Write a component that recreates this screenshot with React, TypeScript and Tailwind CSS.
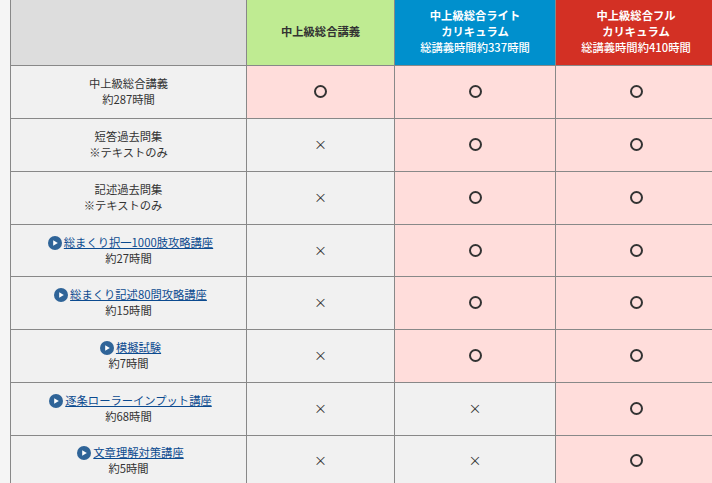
const FONT = "font-['Noto_Sans_CJK_JP','Noto_Sans',sans-serif]";

interface Row {
  title: string;
  sub: string;
  link?: boolean;
  // 記述過去問集 has its note pushed left in the picture
  subClass?: string;
  marks: [boolean, boolean, boolean];
  height: string;
}

const rows: Row[] = [
  { title: "中上級総合講義", sub: "約287時間", marks: [true, true, true], height: "h-[53px]" },
  { title: "短答過去問集", sub: "※テキストのみ", marks: [false, true, true], height: "h-[53px]" },
  { title: "記述過去問集", sub: "※テキストのみ", subClass: "pr-[11px]", marks: [false, true, true], height: "h-[53px]" },
  { title: "総まくり択一1000肢攻略講座", sub: "約27時間", link: true, marks: [false, true, true], height: "h-[52px]" },
  { title: "総まくり記述80問攻略講座", sub: "約15時間", link: true, marks: [false, true, true], height: "h-[53px]" },
  { title: "模擬試験", sub: "約7時間", link: true, marks: [false, true, true], height: "h-[53px]" },
  { title: "逐条ローラーインプット講座", sub: "約68時間", link: true, marks: [false, false, true], height: "h-[53px]" },
  { title: "文章理解対策講座", sub: "約5時間", link: true, marks: [false, false, true], height: "h-[51px]" },
];

function PlayIcon() {
  return (
    <svg viewBox="0 0 14 14" className="mr-[2px] ml-[4px] inline-block h-[14px] w-[14px] align-[-3px]" aria-hidden>
      <circle cx="7" cy="7" r="7" fill="#2f6498" />
      <path d="M5.2 4.2 9.8 7l-4.6 2.8z" fill="#fff" />
    </svg>
  );
}

function Mark({ on }: { on: boolean }) {
  if (on) {
    return <span className="mx-auto block h-[13px] w-[13px] rounded-full border-2 border-[#333]" />;
  }
  return <span className="block pb-[2px] text-[13px] leading-none text-[#333]">×</span>;
}

export default function App() {
  return (
    <div className={`h-[483px] w-[712px] overflow-hidden bg-[#f5f5f5] pl-[10px] ${FONT}`}>
      <table className="w-[706px] table-fixed border-collapse text-center text-[11.3px] leading-[16px] text-[#333]">
        <colgroup>
          <col className="w-[236px]" />
          <col className="w-[148px]" />
          <col className="w-[161px]" />
          <col className="w-[161px]" />
        </colgroup>
        <thead>
          <tr className="h-[65px]">
            <th className="border border-t-0 border-[#888] bg-[#dddddd]" />
            <th className="border border-t-0 border-[#888] bg-[#bfeb92] pb-[3px] font-bold">中上級総合講義</th>
            <th className="border border-t-0 border-[#888] bg-[#0090cd] pb-[3px] font-bold text-white">
              中上級総合ライト
              <br />
              カリキュラム
              <br />
              <span className="font-medium">総講義時間約337時間</span>
            </th>
            <th className="border border-t-0 border-[#888] bg-[#d33024] pb-[3px] font-bold text-white">
              中上級総合フル
              <br />
              カリキュラム
              <br />
              <span className="font-medium">総講義時間約410時間</span>
            </th>
          </tr>
        </thead>
        <tbody>
          {rows.map((row) => (
            <tr key={row.title} className={row.height}>
              <td className="border border-[#888] bg-[#f1f1f1] p-0 pb-[1px]">
                {row.link && <PlayIcon />}
                {row.link ? (
                  <a href="#" className="text-[#0b4a8f] underline">
                    {row.title}
                  </a>
                ) : (
                  row.title
                )}
                <br />
                <span className={row.subClass}>{row.sub}</span>
              </td>
              {row.marks.map((on, i) => (
                <td key={i} className={`border border-[#888] p-0 ${on ? "bg-[#ffdddb]" : "bg-[#f1f1f1]"}`}>
                  <Mark on={on} />
                </td>
              ))}
            </tr>
          ))}
        </tbody>
      </table>
    </div>
  );
}
